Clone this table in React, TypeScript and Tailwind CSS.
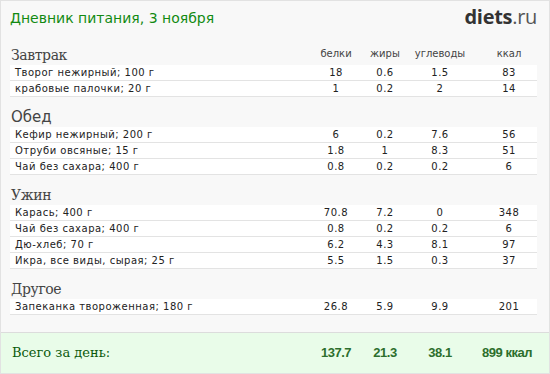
import React from "react";

type Row = [string, string, string, string, string];
type Section = { title: string; serif: boolean; rows: Row[] };

const sections: Section[] = [
  {
    title: "Завтрак",
    serif: true,
    rows: [
      ["Творог нежирный; 100 г", "18", "0.6", "1.5", "83"],
      ["крабовые палочки; 20 г", "1", "0.2", "2", "14"],
    ],
  },
  {
    title: "Обед",
    serif: false,
    rows: [
      ["Кефир нежирный; 200 г", "6", "0.2", "7.6", "56"],
      ["Отруби овсяные; 15 г", "1.8", "1", "8.3", "51"],
      ["Чай без сахара; 400 г", "0.8", "0.2", "0.2", "6"],
    ],
  },
  {
    title: "Ужин",
    serif: true,
    rows: [
      ["Карась; 400 г", "70.8", "7.2", "0", "348"],
      ["Чай без сахара; 400 г", "0.8", "0.2", "0.2", "6"],
      ["Дю-хлеб; 70 г", "6.2", "4.3", "8.1", "97"],
      ["Икра, все виды, сырая; 25 г", "5.5", "1.5", "0.3", "37"],
    ],
  },
  {
    title: "Другое",
    serif: true,
    rows: [["Запеканка твороженная; 180 г", "26.8", "5.9", "9.9", "201"]],
  },
];

const sans = "font-['DejaVu_Sans',Verdana,sans-serif]";

export default function App() {
  return (
    <div className="w-[550px] h-[374px] border border-[#e2e2e2] bg-[#f8f8f8] flex flex-col overflow-hidden">
      <div className="h-[34px] flex items-center justify-between pl-[9px] pr-[12px]">
        <div className={`${sans} text-[14px] leading-[18px] text-[#128a12] -mt-[1px]`}>
          Дневник питания, 3 ноября
        </div>
        <div className="font-['Open_Sans',sans-serif] text-[20px] leading-[24px] -mt-[3px] tracking-[-0.3px]">
          <span className="font-bold text-[#333333]">diets</span>
          <span className="text-[#555555]">.ru</span>
        </div>
      </div>

      <div className="pl-[9px] pr-[12px]">
        {sections.map((s, si) => (
          <div key={s.title}>
            <div className="h-[30px] flex items-end pb-[1px]">
              <div
                className={`flex-1 pl-[1px] text-[#444444] leading-[18px] ${
                  s.serif
                    ? "font-['DejaVu_Serif',Georgia,serif] text-[14px] tracking-[-0.4px]"
                    : `${sans} text-[15px]`
                }`}
              >
                {s.title}
              </div>
              {si === 0 && (
                <div className={`flex ${sans} text-[10px] leading-[12px] text-[#444444] pb-[4px]`}>
                  <div className="w-[50px] text-center">белки</div>
                  <div className="w-[48px] text-center">жиры</div>
                  <div className="w-[62px] text-center">углеводы</div>
                  <div className="w-[66px] pl-[10px] text-center">ккал</div>
                </div>
              )}
            </div>
            {s.rows.map((r, ri) => (
              <div
                key={ri}
                className={`h-[16px] bg-white border-b border-[#e3e3e3] flex items-center ${sans} text-[10px] tracking-[0.5px] text-[#222222]`}
              >
                <div className="flex-1 pl-[5px] whitespace-nowrap">{r[0]}</div>
                <div className="w-[50px] text-center">{r[1]}</div>
                <div className="w-[48px] text-center">{r[2]}</div>
                <div className="w-[62px] text-center">{r[3]}</div>
                <div className="w-[66px] pl-[10px] text-center">{r[4]}</div>
              </div>
            ))}
          </div>
        ))}
      </div>

      <div className="flex-1" />

      <div className="h-[41px] border-t border-[#dcdcdc] bg-[#e9fce9] flex items-center pl-[9px] pr-[12px]">
        <div className="flex-1 pl-[2px] font-['DejaVu_Serif',Georgia,serif] text-[13px] text-[#0b5a0b]">
          Всего за день:
        </div>
        <div className="flex font-['Liberation_Sans',Arial,sans-serif] font-bold text-[13px] tracking-[-0.5px] text-[#2d6f2d]">
          <div className="w-[50px] text-center">137.7</div>
          <div className="w-[48px] text-center">21.3</div>
          <div className="w-[62px] text-center">38.1</div>
          <div className="w-[66px] pl-[6px] text-center">899 ккал</div>
        </div>
      </div>
    </div>
  );
}
